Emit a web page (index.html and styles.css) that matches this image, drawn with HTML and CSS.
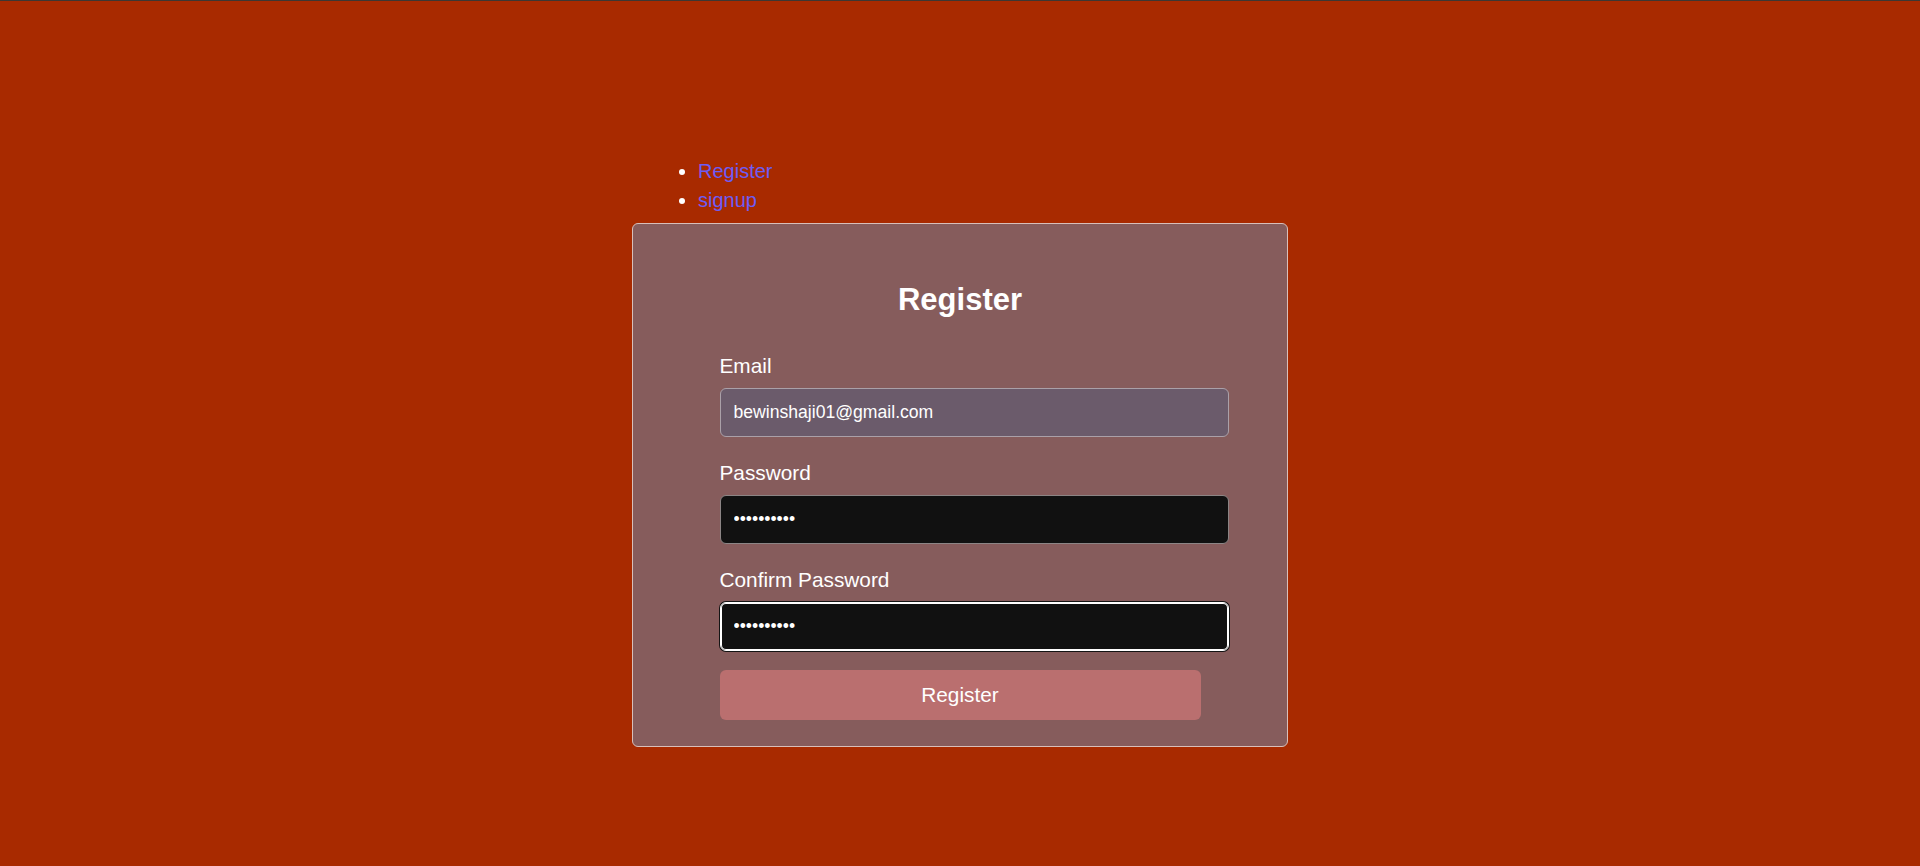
FILE: index.html
```html
<!DOCTYPE html>
<html lang="en">
<head>
<meta charset="utf-8">
<title>Register</title>
<link rel="stylesheet" href="styles.css">
</head>
<body>
<div class="topbar"></div>
<main class="page">
  <div class="wrap">
    <ul class="nav">
      <li><a href="#" class="nav-link">Register</a></li>
      <li><a href="#" class="nav-link">signup</a></li>
    </ul>
    <div class="card">
      <h2 class="title">Register</h2>
      <form class="form" onsubmit="return false">
        <div class="group">
          <label class="label" for="email">Email</label>
          <input class="input input-email" id="email" type="email" value="bewinshaji01@gmail.com">
        </div>
        <div class="group">
          <label class="label" for="pw">Password</label>
          <input class="input input-dark" id="pw" type="password" value="abcdefghij">
        </div>
        <div class="group">
          <label class="label" for="pw2">Confirm Password</label>
          <input class="input input-dark input-focus" id="pw2" type="password" value="abcdefghij">
        </div>
        <button class="btn" type="submit">Register</button>
      </form>
    </div>
  </div>
</main>
</body>
</html>
```
FILE: styles.css
```css
html, body {
  margin: 0;
  padding: 0;
}

body {
  background: #a82a00;
  font-family: "Liberation Sans", Arial, sans-serif;
  color: #ffffff;
  min-height: 866px;
}

.topbar {
  height: 1px;
  background: #3c3733;
}

.page {
  display: flex;
  flex-direction: column;
  align-items: center;
}

.wrap {
  width: 656px;
}

.nav {
  margin: 156px 0 8px 0;
  padding-left: 66px;
  font-size: 20px;
  line-height: 29px;
  color: #ffffff;
}

.nav-link {
  color: #6d5cf5;
  text-decoration: none;
}

.card {
  box-sizing: border-box;
  width: 656px;
  background: #865c5c;
  border: 1px solid #d8bfba;
  border-radius: 6px;
  padding: 58px 0 26px 0;
}

.title {
  margin: 0 0 36px 0;
  font-size: 31px;
  line-height: 36px;
  font-weight: bold;
  text-align: center;
}

.form {
  width: 481px;
  margin: 0 auto;
}

.group {
  margin-bottom: 24px;
}

.group:last-of-type {
  margin-bottom: 19px;
}

.label {
  display: block;
  font-size: 20.8px;
  line-height: 24px;
  margin-bottom: 10px;
}

.input {
  display: block;
  width: 100%;
  box-sizing: content-box;
  padding: 13px;
  margin: 0;
  border: 1px solid #aaa0a8;
  border-radius: 6px;
  font-family: "Liberation Sans", Arial, sans-serif;
  font-size: 17.6px;
  line-height: 21px;
  height: 21px;
  color: #ffffff;
  outline: none;
}

.input-email {
  background: #6b5b6b;
}

.input-dark {
  background: #111111;
  border-color: #8c8585;
}

.input-focus {
  border-color: #ffffff;
  box-shadow: inset 0 0 0 1px #ffffff, 0 0 0 1px #141414;
}

.btn {
  display: block;
  width: 100%;
  height: 50px;
  border: none;
  border-radius: 6px;
  background: #ba6f6f;
  color: #ffffff;
  font-family: "Liberation Sans", Arial, sans-serif;
  font-size: 20.8px;
  cursor: pointer;
}
```
